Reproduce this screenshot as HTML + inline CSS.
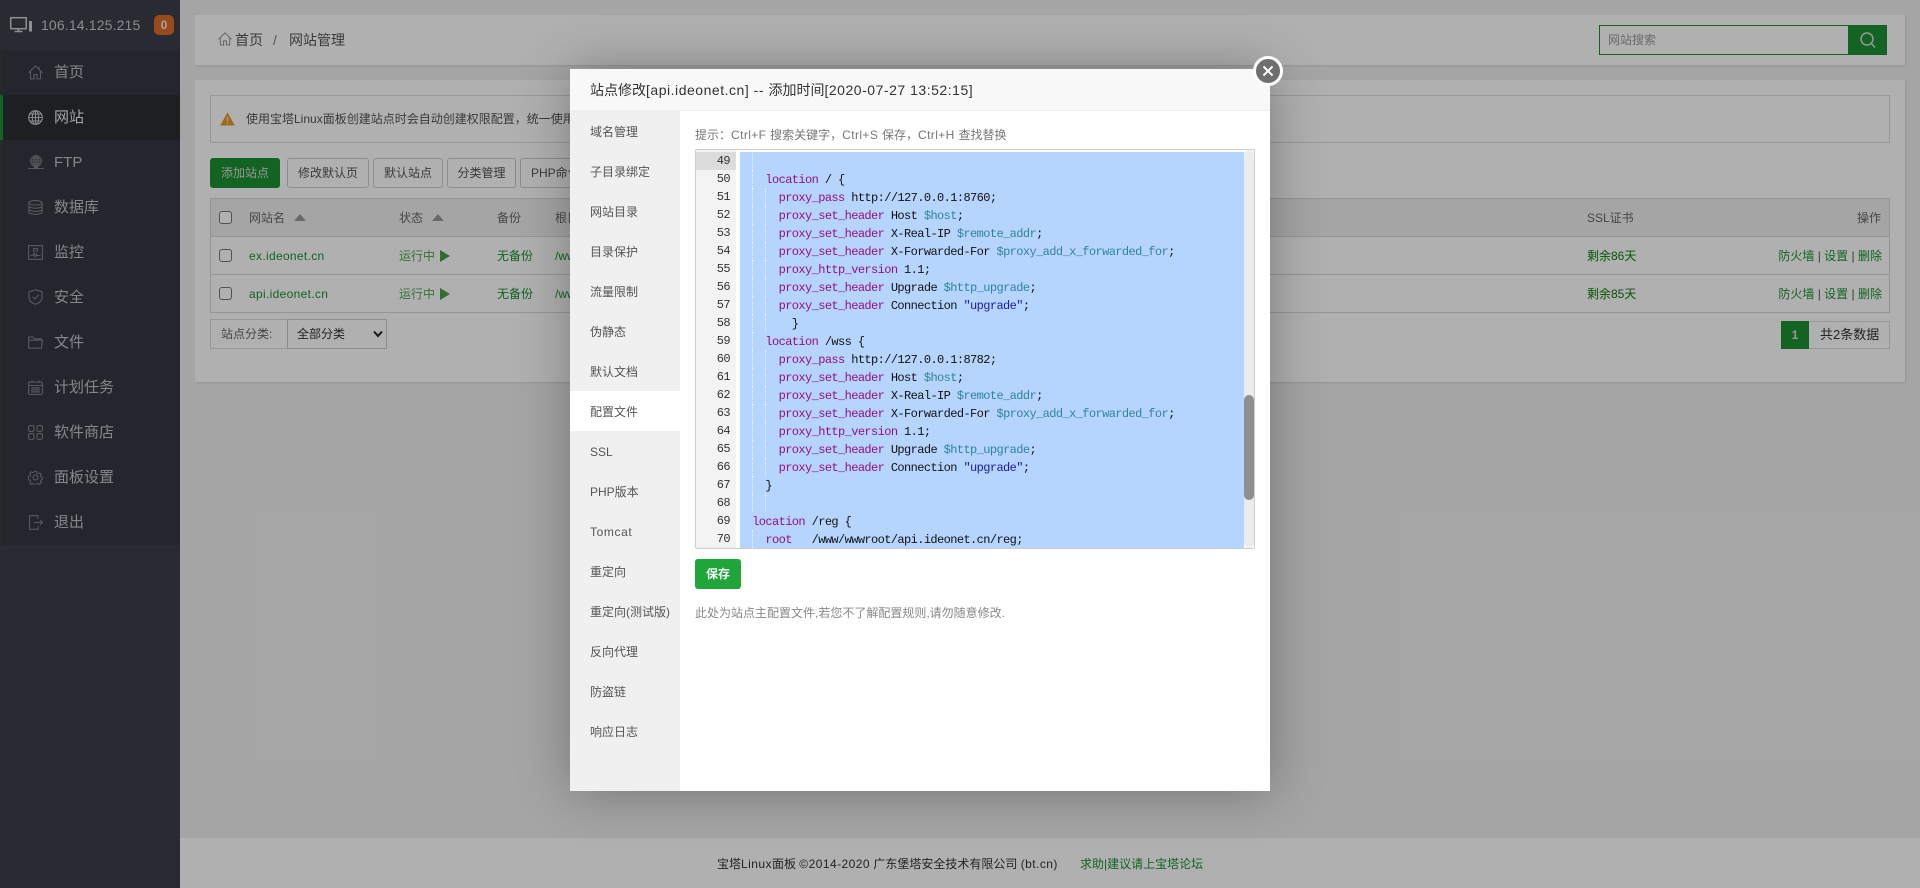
<!DOCTYPE html>
<html lang="zh-CN">
<head>
<meta charset="utf-8">
<title>网站管理</title>
<style>
*{box-sizing:border-box}
html,body{margin:0;padding:0;width:1920px;height:888px;overflow:hidden;background:#f0f0f0;font-family:"Liberation Sans","Noto Sans CJK SC",sans-serif;font-size:12px;color:#555}
.a{position:absolute;white-space:nowrap}
.t{position:absolute;white-space:nowrap;height:20px;line-height:20px}
svg{position:absolute;display:block;fill:none}
.side{position:absolute;left:0;top:0;width:180px;height:888px;background:#3a3f48}
.menu{position:absolute;left:0;top:50px;width:180px;height:495px;background:#333942;border-left:3px solid #3b3e39}
.item{position:absolute;left:-3px;width:180px;height:45px;color:#bfc4c8;font-size:15px;line-height:45px;padding-left:54px}
.item.on{background:#2a2d33;color:#eee;border-left:3px solid #1c9033;padding-left:51px}
.item svg{left:28px;top:15px;stroke:#7d8186;stroke-width:1.1}
.item.on svg{left:25px;stroke:#c8c8c8}
.card{position:absolute;background:#fff;box-shadow:1px 1px 2px rgba(0,0,0,.12)}
.btn{position:absolute;top:158px;height:30px;border:1px solid #ccc;border-radius:3px;background:#fff;color:#555;line-height:28px;text-align:center;font-size:12px;white-space:nowrap;overflow:hidden}
.btn.g{background:#1c9033;border-color:#1c9033;color:#ddd}
.row{position:absolute;left:210px;width:1680px;border:1px solid #d8d8d8}
.cb{position:absolute;width:13px;height:13px;border:1px solid #767676;border-radius:3px;background:#fff;left:219px}
.gr{color:#1c9033}
.run{color:#52a552}
.s{letter-spacing:.32px}
.ov{position:absolute;left:0;top:0;width:1920px;height:888px;background:rgba(0,0,0,.31);z-index:10}
.modal{position:absolute;left:570px;top:69px;width:700px;height:722px;background:#fff;z-index:20;box-shadow:1px 1px 50px rgba(0,0,0,.3)}
.mh{position:absolute;left:0;top:0;width:700px;height:42px;background:#f8f8f8;border-bottom:1px solid #eee;color:#333;font-size:14px;line-height:42px;padding-left:20px;white-space:nowrap}
.mh span{letter-spacing:.52px}
.tabs{position:absolute;left:0;top:42px;width:110px;height:680px;background:#f0f0f0}
.tabs div{height:40px;line-height:43px;padding-left:20px;color:#555;font-size:12px;white-space:nowrap;overflow:hidden}
.tabs .on{background:#fff}
.ed{position:absolute;left:125px;top:80px;width:560px;height:400px;border:1px solid #ccc;border-radius:2px;background:#fff;overflow:hidden}
.gut{position:absolute;left:0;top:0;width:40px;height:398px;background:#f3f3f3;padding-top:2px;font:12px/18px "Liberation Mono",monospace;letter-spacing:-.6px;color:#333;text-align:right}
.gut div{height:18px;padding-right:6px}
.gut .act{background:#dcdcdc}
.sel{position:absolute;left:44px;top:2px;width:504px;height:396px;background:#b5d5ff}
.code{position:absolute;left:43px;top:3px;width:505px;height:395px;font:12px/18px "Liberation Mono",monospace;letter-spacing:-.6px;color:#111;white-space:normal;overflow:hidden}
.code div{height:18px;position:relative;white-space:pre}
.code i{font-style:normal;color:#930f80}
.code b{font-weight:normal;color:#318495}
.code u{text-decoration:none;color:#1a1aa6}
.g1:before,.g2:after{content:"";position:absolute;top:-1px;height:18px;border-left:1px dotted #eef4ff}
.g1:before{left:13px}
.g2:after{left:26px}
.track{position:absolute;left:548px;top:0;width:10px;height:398px;background:#ececec;border-radius:5px}
.thumb{position:absolute;left:0;top:245px;width:10px;height:105px;background:#8f8f8f;border-radius:5px}
.close{position:absolute;left:1253px;top:56px;width:30px;height:30px;border-radius:50%;background:#6f6f6f;border:3px solid #fff;z-index:21}
</style>
</head>
<body>

<div class="side">
  <svg style="left:9px;top:16px" width="24" height="18" viewBox="0 0 24 18" stroke="#d0d0d0" stroke-width="1.5"><rect x="1.7" y="1.7" width="15.5" height="11" /><path d="M9.5 13v2M5.5 15.5h8"/><rect x="20" y="5" width="3" height="10.5" fill="#d0d0d0" stroke="none"/></svg>
  <div class="t" style="left:41px;top:15px;font-size:14px;color:#c8cdd0;letter-spacing:.15px">106.14.125.215</div>
  <div class="a" style="left:154px;top:15px;width:20px;height:20px;border-radius:5px;background:#e06a28;color:#eee;font-weight:bold;font-size:12px;line-height:20px;text-align:center">0</div>
  <div class="menu">
    <div class="item" style="top:0">
      <svg width="15" height="15" viewBox="0 0 15 15"><path d="M.5 7.8 7.5 1l7 6.8M2.500 6.500V14h3.500V9.500h3V14h3.500V6.500M11 2v2.500"/></svg>首页</div>
    <div class="item on" style="top:45px">
      <svg width="15" height="15" viewBox="0 0 15 15"><circle cx="7.500" cy="7.500" r="6.800"/><ellipse cx="7.500" cy="7.500" rx="3.200" ry="6.800"/><path d="M7.500.7v13.600M.7 7.500h13.600M1.800 4h11.400M1.800 11h11.400"/></svg>网站</div>
    <div class="item" style="top:90px">
      <svg width="16" height="15" viewBox="0 0 16 15"><circle cx="8" cy="6" r="5.300"/><ellipse cx="8" cy="6" rx="2.400" ry="5.300"/><path d="M8 .7V11M2.700 6h10.600M3.500 3.500h9M3.500 8.500h9M0 13.500h16"/><rect x="6" y="11.500" width="4" height="2.500" fill="#7d8186" stroke="none"/></svg>FTP</div>
    <div class="item" style="top:135px">
      <svg width="15" height="15" viewBox="0 0 15 15"><ellipse cx="7.500" cy="2.800" rx="6.600" ry="2.200"/><path d="M.9 2.800v9.400c0 1.200 3 2.200 6.600 2.200s6.600-1 6.600-2.200V2.800M.9 6c0 1.200 3 2.200 6.600 2.200S14.100 7.200 14.100 6M.9 9.200c0 1.200 3 2.200 6.600 2.200s6.600-1 6.600-2.200"/></svg>数据库</div>
    <div class="item" style="top:180px">
      <svg width="15" height="15" viewBox="0 0 15 15"><rect x=".6" y=".6" width="13.800" height="13.800"/><path d="M2.500 10.500h2.500l1-2.500 1.200 4 1.300-3 .8 1.500h3.200M5.500 3.500h4v2.500h-4z"/></svg>监控</div>
    <div class="item" style="top:225px">
      <svg width="15" height="16" viewBox="0 0 15 16" style="top:14px"><path d="M7.500.8 14 2.800v6c0 3-3 5.300-6.500 6.500C4 14.100 1 11.800 1 8.800v-6z"/><path d="M4.500 7.800 7 10l3.800-4.200"/></svg>安全</div>
    <div class="item" style="top:270px">
      <svg width="15" height="13" viewBox="0 0 15 13" style="top:16px"><path d="M.6 12.200V1h4.500l1.400 1.800h6.500v1.500M.6 12.200l.1-8h13.700l-1 8z"/></svg>文件</div>
    <div class="item" style="top:315px">
      <svg width="15" height="15" viewBox="0 0 15 15"><rect x=".6" y="2" width="13.800" height="12.400" rx="1.500"/><path d="M.6 5.500h13.800M4 .5v2.500M11 .5v2.500M3 8h9M3 10h9M3 12h9" /><path d="M5 7v6M7.500 7v6M10 7v6" stroke-dasharray="1 1"/></svg>计划任务</div>
    <div class="item" style="top:360px">
      <svg width="15" height="15" viewBox="0 0 15 15"><rect x=".6" y=".6" width="5.400" height="5.800" rx="1.500"/><rect x="9" y=".6" width="5.400" height="5.800" rx="1.500"/><rect x=".6" y="8.600" width="5.400" height="5.800" rx="1.500"/><rect x="9" y="8.600" width="5.400" height="5.800" rx="1.500"/></svg>软件商店</div>
    <div class="item" style="top:405px">
      <svg width="15" height="15" viewBox="0 0 15 15"><circle cx="7.500" cy="7.500" r="2.400"/><path d="M6.300.8h2.400l.4 1.900 1.500.6 1.600-1 1.700 1.700-1 1.600.6 1.500 1.900.4v2.400l-1.900.4-.6 1.500 1 1.600-1.700 1.700-1.600-1-1.500.6-.4 1.900H6.300l-.4-1.900-1.500-.6-1.600 1-1.700-1.700 1-1.600-.6-1.500-1.900-.4V6.300l1.900-.4.6-1.500-1-1.600 1.700-1.700 1.600 1 1.500-.6z" transform="translate(.75 .75) scale(.9)"/></svg>面板设置</div>
    <div class="item" style="top:450px">
      <svg width="15" height="15" viewBox="0 0 15 15"><path d="M10 3.500V.7H1.500v13.600H10v-2.800M6 7.500h8.500M12 5l2.500 2.500L12 10"/></svg>退出</div>
  </div>
</div>

<!-- top bar -->
<div class="card" style="left:195px;top:15px;width:1710px;height:50px"></div>
<svg style="left:218px;top:32px" width="14" height="14" viewBox="0 0 15 15" stroke="#8a8a8a" stroke-width="1"><path d="M.5 7.800 7.500 1l7 6.800M2.500 6.500V14h3.500V9.500h3V14h3.500V6.500"/></svg>
<div class="t" style="left:235px;top:30px;font-size:14px;color:#555">首页</div>
<div class="t" style="left:273px;top:30px;font-size:14px;color:#777">/</div>
<div class="t" style="left:289px;top:30px;font-size:14px;color:#555">网站管理</div>
<div class="a" style="left:1599px;top:25px;width:250px;height:30px;border:1px solid #1c9033;background:#fff;color:#999;line-height:28px;padding-left:8px">网站搜索</div>
<div class="a" style="left:1848px;top:25px;width:39px;height:30px;background:#1c9033"></div>
<svg style="left:1859px;top:31px" width="18" height="18" viewBox="0 0 18 18" stroke="#ddd" stroke-width="1.500"><circle cx="8" cy="8" r="6"/><path d="M12.500 12.500 16 16.500"/></svg>

<!-- main card -->
<div class="card" style="left:195px;top:80px;width:1710px;height:302px"></div>
<div class="a" style="left:210px;top:95px;width:1680px;height:48px;border:1px solid #ddd"></div>
<svg style="left:220px;top:112px" width="15" height="14" viewBox="0 0 15 14"><path d="M7.500.5 14.800 13.500H.2z" fill="#e8951f"/><path d="M7.500 4.500v5M7.500 10.600v1.500" stroke="#ddd" stroke-width="1.600"/></svg>
<div class="t" style="left:246px;top:109px;color:#555;width:350px;overflow:hidden">使用宝塔Linux面板创建站点时会自动创建权限配置，统一使用www用户</div>

<div class="btn g" style="left:210px;width:70px">添加站点</div>
<div class="btn" style="left:287px;width:82px">修改默认页</div>
<div class="btn" style="left:373px;width:70px">默认站点</div>
<div class="btn" style="left:447px;width:69px">分类管理</div>
<div class="btn" style="left:520px;width:76px;text-align:left;padding-left:10px">PHP命令行</div>

<!-- table -->
<div class="row" style="top:198px;height:39px;background:#f0f0f0"></div>
<div class="row" style="top:236px;height:39px"></div>
<div class="row" style="top:274px;height:39px"></div>
<div class="cb" style="top:211px"></div><div class="cb" style="top:249px"></div><div class="cb" style="top:287px"></div>

<div class="t" style="left:249px;top:208px;color:#666">网站名</div>
<svg style="left:294px;top:214px" width="12" height="7" viewBox="0 0 12 7"><path d="M6 0 12 7H0z" fill="#999"/></svg>
<div class="t" style="left:399px;top:208px;color:#666">状态</div>
<svg style="left:432px;top:214px" width="12" height="7" viewBox="0 0 12 7"><path d="M6 0 12 7H0z" fill="#999"/></svg>
<div class="t" style="left:497px;top:208px;color:#666">备份</div>
<div class="t" style="left:555px;top:208px;color:#666">根目录</div>
<div class="t" style="left:1587px;top:208px;color:#666">SSL证书</div>
<div class="t" style="left:1857px;top:208px;color:#666">操作</div>

<div class="t gr s" style="left:249px;top:246px">ex.ideonet.cn</div>
<div class="t run" style="left:399px;top:246px">运行中</div>
<svg style="left:440px;top:250px" width="10" height="12" viewBox="0 0 10 12"><path d="M0 0 10 6 0 12z" fill="#4a9e4a"/></svg>
<div class="t gr" style="left:497px;top:246px">无备份</div>
<div class="t gr" style="left:555px;top:246px">/www/wwwroot</div>
<div class="t" style="left:1587px;top:246px;color:#0a7a0a">剩余86天</div>
<div class="t" style="right:38px;top:246px;color:#555"><span class="gr">防火墙</span> | <span class="gr">设置</span> | <span class="gr">删除</span></div>

<div class="t gr s" style="left:249px;top:284px">api.ideonet.cn</div>
<div class="t run" style="left:399px;top:284px">运行中</div>
<svg style="left:440px;top:288px" width="10" height="12" viewBox="0 0 10 12"><path d="M0 0 10 6 0 12z" fill="#4a9e4a"/></svg>
<div class="t gr" style="left:497px;top:284px">无备份</div>
<div class="t gr" style="left:555px;top:284px">/www/wwwroot</div>
<div class="t" style="left:1587px;top:284px;color:#0a7a0a">剩余85天</div>
<div class="t" style="right:38px;top:284px;color:#555"><span class="gr">防火墙</span> | <span class="gr">设置</span> | <span class="gr">删除</span></div>

<!-- filter -->
<div class="a" style="left:210px;top:319px;width:78px;height:30px;border:1px solid #ddd;color:#666;line-height:28px;padding-left:10px">站点分类:</div>
<div class="a" style="left:287px;top:319px;width:100px;height:30px;border:1px solid #ccc;color:#333;line-height:29px;padding-left:9px;background:#fff;font-size:12px">全部分类</div>
<svg style="left:373px;top:330px" width="10" height="8" viewBox="0 0 10 8" stroke="#222" stroke-width="2"><path d="M1 1.500 5 6l4-4.500"/></svg>

<!-- pagination -->
<div class="a" style="left:1781px;top:321px;width:28px;height:28px;background:#1c9033;color:#ddd;font-weight:bold;text-align:center;line-height:28px">1</div>
<div class="a" style="left:1809px;top:321px;width:81px;height:28px;border:1px solid #ddd;border-left:0;color:#333;font-size:13px;line-height:26px;padding-left:11px">共2条数据</div>

<!-- footer -->
<div class="a" style="left:180px;top:838px;width:1740px;height:50px;background:#fff"></div>
<div class="t" style="left:717px;top:854px;color:#333">宝塔<span style="letter-spacing:.45px">Linux</span>面板 <span style="letter-spacing:.45px">©2014-2020</span> 广东堡塔安全技术有限公司 <span style="letter-spacing:.45px">(bt.cn)</span></div>
<div class="t gr" style="left:1080px;top:854px">求助|建议请上宝塔论坛</div>

<div class="ov"></div>

<div class="modal">
  <div class="mh">站点修改<span>[api.ideonet.cn] -- </span>添加时间<span>[2020-07-27 13:52:15]</span></div>
  <div class="tabs">
    <div>域名管理</div><div>子目录绑定</div><div>网站目录</div><div>目录保护</div><div>流量限制</div><div>伪静态</div><div>默认文档</div><div class="on">配置文件</div><div>SSL</div><div>PHP版本</div><div><span style="letter-spacing:.6px">Tomcat</span></div><div>重定向</div><div>重定向(测试版)</div><div>反向代理</div><div>防盗链</div><div>响应日志</div>
  </div>
  <div class="t" style="left:125px;top:56px;color:#777">提示：<span style="letter-spacing:.4px">Ctrl+F </span>搜索关键字，<span style="letter-spacing:.4px">Ctrl+S </span>保存，<span style="letter-spacing:.4px">Ctrl+H </span>查找替换</div>
  <div class="ed">
    <div class="gut">
      <div class="act">49</div><div>50</div><div>51</div><div>52</div><div>53</div><div>54</div><div>55</div><div>56</div><div>57</div><div>58</div><div>59</div><div>60</div><div>61</div><div>62</div><div>63</div><div>64</div><div>65</div><div>66</div><div>67</div><div>68</div><div>69</div><div>70</div>
    </div>
    <div class="sel"></div>
    <div class="code">
<div class="g1"> </div>
<div class="g1">    <i>location</i> / {</div>
<div class="g1 g2">      <i>proxy_pass</i> http://127.0.0.1:8760;</div>
<div class="g1 g2">      <i>proxy_set_header</i> Host <b>$host</b>;</div>
<div class="g1 g2">      <i>proxy_set_header</i> X-Real-IP <b>$remote_addr</b>;</div>
<div class="g1 g2">      <i>proxy_set_header</i> X-Forwarded-For <b>$proxy_add_x_forwarded_for</b>;</div>
<div class="g1 g2">      <i>proxy_http_version</i> 1.1;</div>
<div class="g1 g2">      <i>proxy_set_header</i> Upgrade <b>$http_upgrade</b>;</div>
<div class="g1 g2">      <i>proxy_set_header</i> Connection <u>"upgrade"</u>;</div>
<div class="g1 g2">        }</div>
<div class="g1">    <i>location</i> /wss {</div>
<div class="g1 g2">      <i>proxy_pass</i> http://127.0.0.1:8782;</div>
<div class="g1 g2">      <i>proxy_set_header</i> Host <b>$host</b>;</div>
<div class="g1 g2">      <i>proxy_set_header</i> X-Real-IP <b>$remote_addr</b>;</div>
<div class="g1 g2">      <i>proxy_set_header</i> X-Forwarded-For <b>$proxy_add_x_forwarded_for</b>;</div>
<div class="g1 g2">      <i>proxy_http_version</i> 1.1;</div>
<div class="g1 g2">      <i>proxy_set_header</i> Upgrade <b>$http_upgrade</b>;</div>
<div class="g1 g2">      <i>proxy_set_header</i> Connection <u>"upgrade"</u>;</div>
<div class="g1">    }</div>
<div class="g1 g2"> </div>
<div>  <i>location</i> /reg {</div>
<div class="g1">    <i>root</i>   /www/wwwroot/api.ideonet.cn/reg;</div>
    </div>
    <div class="track"><div class="thumb"></div></div>
  </div>
  <div class="a" style="left:125px;top:490px;width:46px;height:30px;background:#20a53a;border-radius:3px;color:#fff;font-weight:bold;text-align:center;line-height:30px">保存</div>
  <div class="t" style="left:125px;top:534px;color:#888">此处为站点主配置文件,若您不了解配置规则,请勿随意修改.</div>
</div>
<div class="close">
  <svg style="left:6px;top:6px" width="12" height="12" viewBox="0 0 12 12" stroke="#fff" stroke-width="2"><path d="M1.500 1.500l9 9M10.500 1.500l-9 9"/></svg>
</div>

</body>
</html>
